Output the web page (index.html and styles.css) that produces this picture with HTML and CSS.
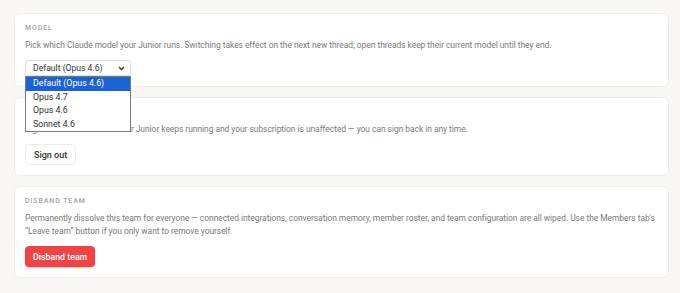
FILE: index.html
```html
<!DOCTYPE html>
<html>
<head>
  <title>Team settings</title>
  <link rel="stylesheet" href="styles.css">
</head>
<body>
  <div class="settings">
    <div class="card">
      <div class="card-title">Model</div>
      <p class="card-text">Pick which Claude model your Junior runs. Switching takes effect on the next new thread; open threads keep their current model until they end.</p>
      <div class="select-wrap">
        <div class="select">
          <span>Default (Opus 4.6)</span>
          <svg class="chevron" width="7" height="5" viewBox="0 0 7 5"><path d="M1 1 L3.5 3.5 L6 1" fill="none" stroke="#333" stroke-width="1.3"/></svg>
        </div>
        <ul class="select-menu">
          <li class="selected">Default (Opus 4.6)</li>
          <li>Opus 4.7</li>
          <li>Opus 4.6</li>
          <li>Sonnet 4.6</li>
        </ul>
      </div>
    </div>

    <div class="card">
      <div class="card-title">Sign out</div>
      <p class="card-text">Sign out of this browser. Your Junior keeps running and your subscription is unaffected — you can sign back in any time.</p>
      <button class="btn">Sign out</button>
    </div>

    <div class="card">
      <div class="card-title">Disband team</div>
      <p class="card-text">Permanently dissolve this team for everyone — connected integrations, conversation memory, member roster, and team configuration are all wiped. Use the Members tab's “Leave team” button if you only want to remove yourself.</p>
      <button class="btn btn-danger">Disband team</button>
    </div>
  </div>
</body>
</html>
```

FILE: styles.css
```css
body {
  margin: 0;
  background-color: #f8f7f5;
  font-family: Roboto, sans-serif;
  color: #777;
}

.settings {
  display: flex;
  flex-direction: column;
  gap: 10px;
  padding: 13px 11px 16px 14px;
}

.card {
  background-color: #fff;
  border: 1px solid #efece9;
  border-radius: 6px;
  padding: 10px 6px 10px 10px;
}

.card-title {
  font-size: 7px;
  font-weight: 500;
  letter-spacing: 0.9px;
  text-transform: uppercase;
  color: #a3a3a3;
  line-height: 8px;
}

.card-text {
  margin: 7px 0 8px;
  font-size: 8.45px;
  line-height: 13px;
  letter-spacing: -0.04px;
  color: #7a7a7a;
}

.select-wrap {
  position: relative;
  width: 106px;
}

.select {
  display: flex;
  align-items: center;
  justify-content: space-between;
  height: 14px;
  padding: 0 5px 0 7px;
  border: 1px solid #dcdcdc;
  border-radius: 3px;
  font-size: 8.6px;
  color: #333;
}

.select-menu {
  position: absolute;
  top: 16px;
  left: 0;
  width: 104px;
  margin: 0;
  padding: 0;
  list-style: none;
  background-color: #fff;
  border: 1px solid #7a7a7a;
  font-size: 8.8px;
  color: #333;
}

.select-menu li {
  height: 13.5px;
  line-height: 13.5px;
  padding: 0 7px;
}

.select-menu .selected {
  background-color: #1c62d4;
  color: #fff;
}

.btn {
  display: block;
  height: 21px;
  padding: 0 8px;
  border: 1px solid #ececec;
  border-radius: 4px;
  background-color: #fff;
  font-family: inherit;
  font-size: 9px;
  font-weight: 500;
  color: #333;
}

.btn-danger {
  padding: 0 7px;
  border-color: #ea4244;
  background-color: #ee4448;
  font-size: 8.8px;
  color: #fff;
  box-shadow: 0 1px 2px rgba(200, 40, 40, 0.3);
}
```
